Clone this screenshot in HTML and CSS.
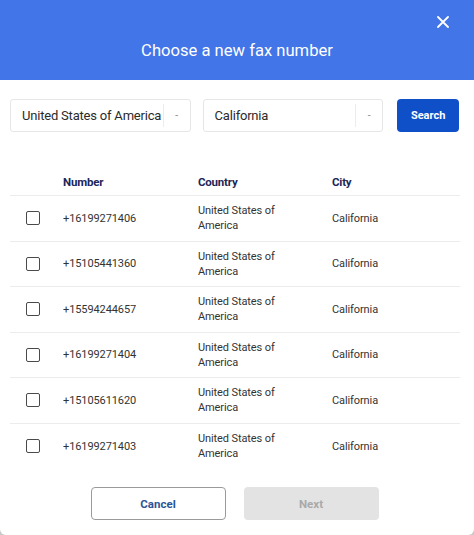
FILE: index.html
```
<!DOCTYPE html>
<html>
<head>
    <title>Choose a new fax number</title>
    <link rel="stylesheet" href="styles.css">
</head>
<body>
    <div class="dialog">
        <div class="header">
            <button class="close" type="button">
                <svg width="12" height="12" viewBox="0 0 12 12"><path d="M1 1 L11 11 M11 1 L1 11" stroke="white" stroke-width="1.8" stroke-linecap="round"/></svg>
            </button>
            <h1>Choose a new fax number</h1>
        </div>
        <div class="filters">
            <div class="select">
                <span class="value">United States of America</span>
                <span class="arrow">-</span>
            </div>
            <div class="select">
                <span class="value">California</span>
                <span class="arrow">-</span>
            </div>
            <button class="search" type="button">Search</button>
        </div>
        <div class="table">
            <div class="row head">
                <div></div>
                <div>Number</div>
                <div>Country</div>
                <div>City</div>
            </div>
            <div class="row">
                <div><span class="check"></span></div>
                <div>+16199271406</div>
                <div class="country">United States of America</div>
                <div>California</div>
            </div>
            <div class="row">
                <div><span class="check"></span></div>
                <div>+15105441360</div>
                <div class="country">United States of America</div>
                <div>California</div>
            </div>
            <div class="row">
                <div><span class="check"></span></div>
                <div>+15594244657</div>
                <div class="country">United States of America</div>
                <div>California</div>
            </div>
            <div class="row">
                <div><span class="check"></span></div>
                <div>+16199271404</div>
                <div class="country">United States of America</div>
                <div>California</div>
            </div>
            <div class="row">
                <div><span class="check"></span></div>
                <div>+15105611620</div>
                <div class="country">United States of America</div>
                <div>California</div>
            </div>
            <div class="row">
                <div><span class="check"></span></div>
                <div>+16199271403</div>
                <div class="country">United States of America</div>
                <div>California</div>
            </div>
        </div>
        <div class="actions">
            <button class="cancel" type="button">Cancel</button>
            <button class="next" type="button" disabled>Next</button>
        </div>
    </div>
</body>
</html>
```
FILE: styles.css
```
* { margin: 0; padding: 0; box-sizing: border-box; font-family: Roboto, "Liberation Sans", sans-serif; }
body { background: #c9c9c9; width: 474px; height: 535px; overflow: hidden; }
.dialog { background: white; height: 535px; border-radius: 0 0 6px 6px; }
.header { position: relative; background: #4275e8; height: 80px; color: white; text-align: center; }
.header h1 { font-size: 16.6px; font-weight: 400; padding-top: 41px; line-height: 20px; }
.close { position: absolute; top: 16px; right: 25px; background: none; border: none; width: 12px; height: 12px; cursor: pointer; }
.close svg { display: block; }
.filters { display: flex; padding: 19px 15px 0 10px; height: 52px; }
.select { width: 181px; height: 33px; border: 1px solid #e6e6e6; border-radius: 3px; display: flex; align-items: center; margin-right: 12px; }
.select + .select { margin-right: 14px; }
.select .value { flex: 1; font-size: 13px; color: #2b2b2b; padding-left: 11px; white-space: nowrap; letter-spacing: -0.2px; }
.select .arrow { width: 27px; height: 23px; border-left: 1px solid #ececec; color: #888; font-size: 10px; display: flex; align-items: center; justify-content: center; }
.search { width: 62px; height: 33px; background: #0f50c8; color: white; border: none; border-radius: 4px; font-size: 11px; font-weight: 700; }
.table { margin: 35px 14px 0 10px; }
.row { display: grid; grid-template-columns: 53px 135px 134px 1fr; align-items: center; height: 45.5px; border-bottom: 1px solid #ececec; font-size: 11px; color: #333; letter-spacing: -0.1px; }
.row:last-child { border-bottom: none; }
.row.head { height: 29px; font-weight: 700; color: #1b2659; font-size: 11.5px; letter-spacing: -0.2px; align-items: end; padding-bottom: 6px; }
.country { width: 100px; line-height: 15px; }
.check { display: block; width: 14px; height: 14px; border: 1.5px solid #4a4a4a; border-radius: 2px; margin-left: 16px; }
.actions { display: flex; justify-content: center; gap: 18px; margin-top: 18px; padding-right: 5px; }
.actions button { width: 135px; height: 33px; border-radius: 4px; font-size: 11.5px; font-weight: 700; }
.cancel { background: white; border: 1px solid #9a9a9a; color: #2b5496; }
.next { background: #e3e3e3; border: none; color: #a9a9a9; }
```
